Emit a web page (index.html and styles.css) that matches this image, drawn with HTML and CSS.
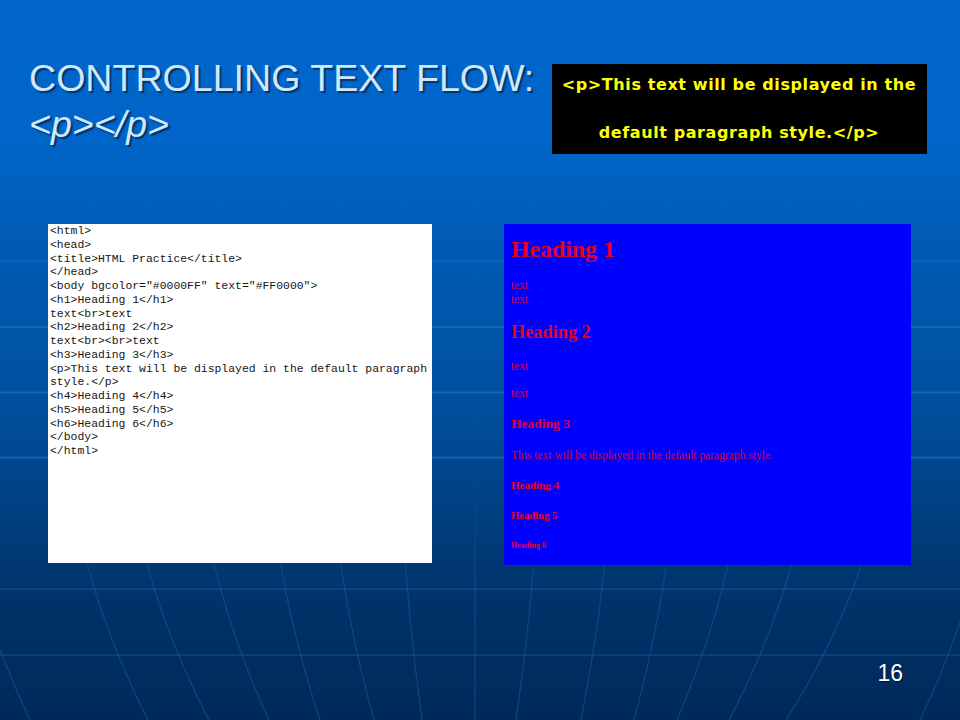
FILE: index.html
```html
<!DOCTYPE html>
<html lang="en">
<head>
<meta charset="utf-8">
<title>Controlling Text Flow</title>
<link rel="stylesheet" href="styles.css">
</head>
<body>
<main class="slide">
  <svg class="grid" width="960" height="720" viewBox="0 0 960 720" aria-hidden="true">
    <defs>
      <linearGradient id="fade" gradientUnits="userSpaceOnUse" x1="0" y1="100" x2="0" y2="720">
        <stop offset="0" stop-color="#1c6ec4" stop-opacity="0"/>
        <stop offset="0.4" stop-color="#1c6ec4" stop-opacity="0.07"/>
        <stop offset="0.7" stop-color="#1c6ec4" stop-opacity="0.15"/>
        <stop offset="0.8" stop-color="#1c6ec4" stop-opacity="0.38"/>
        <stop offset="1" stop-color="#1c6ec4" stop-opacity="0.38"/>
      </linearGradient>
    </defs>
    <g class="rings">
      <path class="ring-faint" d="M0 196H960"/>
      <path d="M0 261.5H960"/>
      <path class="ring-strong" d="M0 327H960"/>
      <path class="ring-strong" d="M0 392.5H960"/>
      <path class="ring-strong" d="M0 457.5H960"/>
      <path class="ring-dim" d="M0 589H960"/>
      <path class="ring-dim" d="M0 655H960"/>
    </g>
    <g class="meridians">
      <path d="M30 720Q-128 390 30 60"/>
      <path d="M148 720Q-20 390 148 60"/>
      <path d="M209 720Q37 390 209 60"/>
      <path d="M269 720Q117 390 269 60"/>
      <path d="M320 720Q211 390 320 60"/>
      <path d="M374 720Q282 390 374 60"/>
      <path d="M422 720Q376 390 422 60"/>
      <path d="M475 720Q475 390 475.01 60"/>
      <path d="M516 720Q565 390 516 60"/>
      <path d="M581 720Q647 390 581 60"/>
      <path d="M634 720Q724 390 634 60"/>
      <path d="M677 720Q819 390 677 60"/>
      <path d="M729 720Q903 390 729 60"/>
      <path d="M786 720Q996 390 786 60"/>
      <path d="M920 720Q1078 390 920 60"/>
    </g>
  </svg>

  <header class="top">
    <h1 class="title">CONTROLLING TEXT FLOW:<br><em>&lt;p&gt;&lt;/p&gt;</em></h1>
    <p class="callout"><span>&lt;p&gt;This text will be displayed in the</span><span>default paragraph style.&lt;/p&gt;</span></p>
  </header>

  <section class="panels">
<pre class="code">&lt;html&gt;
&lt;head&gt;
&lt;title&gt;HTML Practice&lt;/title&gt;
&lt;/head&gt;
&lt;body bgcolor="#0000FF" text="#FF0000"&gt;
&lt;h1&gt;Heading 1&lt;/h1&gt;
text&lt;br&gt;text
&lt;h2&gt;Heading 2&lt;/h2&gt;
text&lt;br&gt;&lt;br&gt;text
&lt;h3&gt;Heading 3&lt;/h3&gt;
&lt;p&gt;This text will be displayed in the default paragraph
style.&lt;/p&gt;
&lt;h4&gt;Heading 4&lt;/h4&gt;
&lt;h5&gt;Heading 5&lt;/h5&gt;
&lt;h6&gt;Heading 6&lt;/h6&gt;
&lt;/body&gt;
&lt;/html&gt;</pre>
    <article class="render">
      <h2 class="r1">Heading 1</h2>
      <p class="rtext rt1">text<br>text</p>
      <h3 class="r2">Heading 2</h3>
      <p class="rtext rt2">text<br><br>text</p>
      <h4 class="r3">Heading 3</h4>
      <p class="rtext rt3">This text will be displayed in the default paragraph style.</p>
      <h5 class="r4">Heading 4</h5>
      <h5 class="r5">Heading 5</h5>
      <h6 class="r6">Heading 6</h6>
    </article>
  </section>

  <footer class="foot">16</footer>
</main>
</body>
</html>
```

FILE: styles.css
```css
html, body {
  margin: 0;
  padding: 0;
}

.slide {
  position: relative;
  width: 960px;
  height: 720px;
  overflow: hidden;
  display: flex;
  flex-direction: column;
  background: linear-gradient(180deg, #0066cc 0%, #0064c8 20%, #005cb6 33%, #00509f 55%, #003f7f 72%, #003268 84%, #00295a 100%);
  font-family: "Liberation Sans", Arial, sans-serif;
}

.grid {
  position: absolute;
  inset: 0;
}

.rings path {
  fill: none;
  stroke: #1c6ec6;
  stroke-width: 2;
  opacity: 0.45;
}

.rings .ring-strong {
  opacity: 0.7;
}

.rings .ring-faint {
  opacity: 0.15;
}

.rings .ring-dim {
  opacity: 0.25;
}

.meridians path {
  fill: none;
  stroke: url(#fade);
  stroke-width: 1.2;
}

.top {
  position: relative;
  display: flex;
  align-items: flex-start;
  justify-content: space-between;
  height: 160px;
  padding: 55px 33px 0 29px;
  box-sizing: border-box;
}

.title {
  margin: 0;
  font-size: 37.6px;
  line-height: 46px;
  font-weight: 400;
  color: #cfe8fb;
  text-shadow: 2px 2px 1px #03356e;
  white-space: nowrap;
}

.callout {
  margin: 9px 0 0;
  width: 375px;
  height: 90px;
  box-sizing: border-box;
  padding-right: 1px;
  display: flex;
  flex-direction: column;
  justify-content: center;
  align-items: center;
  gap: 28px;
  background: #000;
  color: #ffff00;
  font-family: "DejaVu Sans", sans-serif;
  font-weight: 700;
  font-size: 16px;
  line-height: 20px;
  letter-spacing: 0.6px;
  white-space: nowrap;
}

.panels {
  position: relative;
  display: flex;
  align-items: flex-start;
  margin-top: 64px;
  padding-left: 48px;
  gap: 72px;
}

.code {
  margin: 0;
  width: 384px;
  height: 339px;
  box-sizing: border-box;
  overflow: hidden;
  padding-left: 2px;
  background: #fff;
  color: #161616;
  font-family: "Liberation Mono", "Courier New", monospace;
  font-size: 11.43px;
  line-height: 13.75px;
  white-space: pre;
}

.render {
  width: 407px;
  height: 341px;
  box-sizing: border-box;
  padding: 11px 0 0 7px;
  background: #0000ff;
  color: #e6001e;
  font-family: "Liberation Serif", "Times New Roman", serif;
}

.render > * {
  margin: 0;
}

.r1 {
  font-size: 23.8px;
  line-height: 28px;
}

.rtext {
  font-size: 11.5px;
  line-height: 13.5px;
  font-weight: 400;
  color: #dc0028;
  white-space: nowrap;
}

.rt1 {
  margin-top: 16px;
}

.r2 {
  font-size: 18.3px;
  line-height: 22px;
  margin-top: 15px;
}

.rt2 {
  margin-top: 17px;
}

.r3 {
  font-size: 13.5px;
  line-height: 16px;
  margin-top: 15px;
}

.rt3 {
  margin-top: 17px;
}

.r4 {
  font-size: 11px;
  line-height: 14px;
  margin-top: 16px;
}

.r5 {
  font-size: 10.6px;
  line-height: 14px;
  margin-top: 17px;
}

.r6 {
  font-size: 8px;
  line-height: 12px;
  margin-top: 17px;
}

.foot {
  position: relative;
  margin-top: auto;
  padding: 0 57px 35px 0;
  text-align: right;
  font-size: 23px;
  line-height: 24px;
  color: #fff;
  text-shadow: 1px 1px 1px #001a3a;
}
```
